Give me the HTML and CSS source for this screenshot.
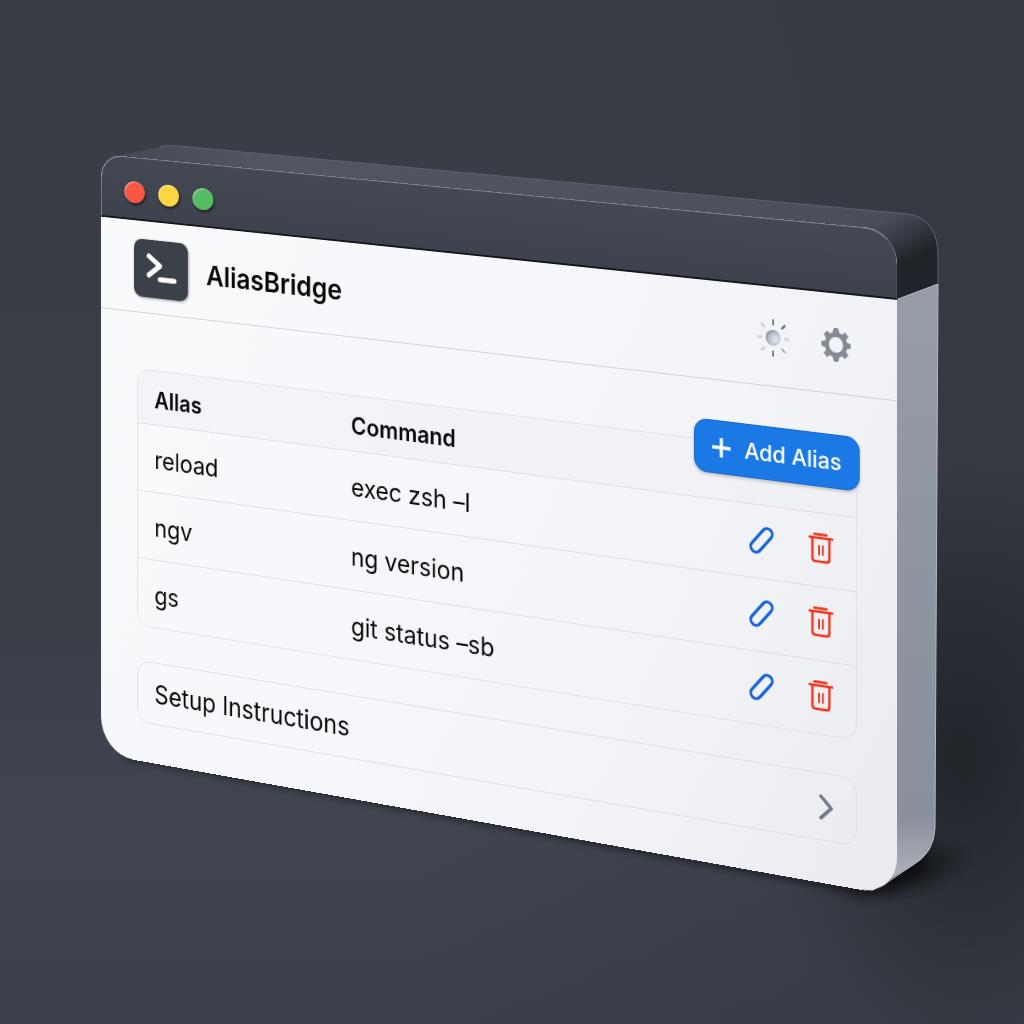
FILE: index.html
```
<!DOCTYPE html>
<html lang="en">
<head>
<meta charset="utf-8">
<title>AliasBridge</title>
<link rel="stylesheet" href="styles.css">
</head>
<body>
<div class="scene">
  <svg class="slab" viewBox="0 0 1024 1024" aria-hidden="true">
    <defs>
      <linearGradient id="lid" x1="0" y1="0" x2="1" y2="0">
        <stop offset="0" stop-color="#444853"/><stop offset=".2" stop-color="#525661"/>
        <stop offset=".85" stop-color="#4c505c"/><stop offset="1" stop-color="#484c57"/>
      </linearGradient>
      <linearGradient id="cap" gradientUnits="userSpaceOnUse" x1="892" y1="216" x2="922" y2="268">
        <stop offset="0" stop-color="#494d58"/><stop offset=".5" stop-color="#30333b"/><stop offset=".8" stop-color="#1f2227"/><stop offset="1" stop-color="#202329"/>
      </linearGradient>
      <linearGradient id="side" x1="0" y1="0" x2="0" y2="1">
        <stop offset="0" stop-color="#979da7"/><stop offset=".5" stop-color="#8f959f"/>
        <stop offset=".88" stop-color="#8a909b"/><stop offset="1" stop-color="#b6bac3"/>
      </linearGradient>
      <radialGradient id="corner"><stop offset="0" stop-color="#08090c" stop-opacity=".9"/><stop offset=".5" stop-color="#0c0e11" stop-opacity=".5"/><stop offset="1" stop-color="#14161a" stop-opacity="0"/></radialGradient>
      <filter id="contact" x="-20%" y="-20%" width="140%" height="140%"><feGaussianBlur stdDeviation="4"/></filter>
    </defs>
    <path fill="#0b0d10" opacity=".75" filter="url(#contact)" d="M120 756 L862 892 Q885 896 922 868 L930 800 L800 780 L300 700Z"/>
    <ellipse fill="url(#corner)" cx="900" cy="872" rx="78" ry="30" transform="rotate(-14 900 872)"/>
    <path fill="url(#lid)" d="M102 190 Q100 160 122 155 L160 147 Q166 145 178 146 L908 214 Q938 219 938 256 L938 284 L897 299Z"/>
    <path fill="url(#cap)" d="M866 228 L892 213 L908 214 Q938 219 938 256 L938 284 L897 300Z"/>
    <path fill="none" stroke="#5d626f" d="M160 147 Q166 145 178 146 L908 214 Q938 219 938 256 L938 283"/>
    <path fill="url(#side)" d="M890 302 L938 284 L935 828 Q934 853 913 865 L872 891 L850 880Z"/>
    <path fill="none" stroke="#b4b9c2" d="M898 299 L938 284 L935 828 Q934 853 913 865 L882 886"/>
  </svg>

  <main class="window">
    <div class="titlebar">
      <span class="light red"></span><span class="light yellow"></span><span class="light green"></span>
    </div>
    <header class="header">
      <span class="logo">
        <svg width="68" height="64" viewBox="0 0 68 64" fill="none" stroke="#fff" stroke-width="5.500" stroke-linecap="round" stroke-linejoin="round" aria-hidden="true">
          <path d="M19 18 L33 28 L19 39"/><path d="M33 43 H51"/>
        </svg>
      </span>
      <h1 class="name">AliasBridge</h1>
      <button class="icon-button" type="button" aria-label="Theme">
        <svg width="38" height="42" viewBox="0 0 38 42" aria-hidden="true">
          <defs><radialGradient id="orb" cx=".65" cy=".6" r=".65"><stop offset="0" stop-color="#e3e6ec"/><stop offset=".65" stop-color="#bcc2cb"/><stop offset="1" stop-color="#858c97"/></radialGradient></defs>
          <circle cx="19" cy="21" r="8" fill="url(#orb)"/>
          <g stroke-width="2"><path stroke="#777c84" d="M19 2v6M19 34v6"/><path stroke="#555a62" d="M32 7l-4 4"/><path stroke="#a4aab3" d="M28 31l4 4"/><path stroke="#c3c8d0" d="M6 7l4 4M6 35l4-4"/><path stroke="#cfd3da" stroke-width="3" d="M2 21h5M31 21h5"/></g>
        </svg>
      </button>
      <button class="icon-button" type="button" aria-label="Settings">
        <svg width="32" height="36" viewBox="-16 -18 32 36" aria-hidden="true">
          <g fill="#858b94" stroke="#70767f" stroke-width=".8">
            <path fill-rule="evenodd" d="M-2-16.500H2L3-12 6.500-10.500 9.500-13 12.500-9.500 10-6 11.500-2.500 15-2V2L11.500 2.500 10 6 12.500 9.500 9.500 13 6.500 10.500 3 12 2 16.500H-2L-3 12-6.500 10.500-9.500 13-12.500 9.500-10 6-11.500 2.500-15 2V-2L-11.500-2.500-10-6-12.500-9.500-9.500-13-6.500-10.500-3-12ZM0-8.500A8 8.500 0 1 0 0 8.500A8 8.500 0 1 0 0-8.500Z"/>
          </g>
        </svg>
      </button>
    </header>

    <div class="content">
      <section class="aliases">
        <table class="table">
          <thead>
            <tr><th class="col-alias" scope="col">Allas</th><th scope="col">Command</th><td class="col-actions"></td></tr>
          </thead>
          <tbody>
            <tr><td>reload</td><td>exec zsh –l</td><td><div class="actions">
              <button class="icon-button" type="button" aria-label="Edit reload"><svg class="edit" width="32" height="34" viewBox="0 0 32 34"><use href="#pencil"/></svg></button>
              <button class="icon-button" type="button" aria-label="Delete reload"><svg class="delete" width="32" height="34" viewBox="0 0 32 34"><use href="#trash"/></svg></button>
            </div></td></tr>
            <tr><td>ngv</td><td>ng version</td><td><div class="actions">
              <button class="icon-button" type="button" aria-label="Edit ngv"><svg class="edit" width="32" height="34" viewBox="0 0 32 34"><use href="#pencil"/></svg></button>
              <button class="icon-button" type="button" aria-label="Delete ngv"><svg class="delete" width="32" height="34" viewBox="0 0 32 34"><use href="#trash"/></svg></button>
            </div></td></tr>
            <tr><td>gs</td><td>git status –sb</td><td><div class="actions">
              <button class="icon-button" type="button" aria-label="Edit gs"><svg class="edit" width="32" height="34" viewBox="0 0 32 34"><use href="#pencil"/></svg></button>
              <button class="icon-button" type="button" aria-label="Delete gs"><svg class="delete" width="32" height="34" viewBox="0 0 32 34"><use href="#trash"/></svg></button>
            </div></td></tr>
          </tbody>
        </table>
        <button class="add" type="button">
          <svg width="22" height="22" viewBox="0 0 22 22" stroke="#fff" stroke-width="3.400" aria-hidden="true"><path d="M11 1v20M1 11h20"/></svg>
          Add Alias
        </button>
      </section>
      <button class="setup" type="button">
        Setup Instructions
        <svg width="16" height="28" viewBox="0 0 16 28" fill="none" stroke="#737982" stroke-width="3.500" stroke-linecap="round" stroke-linejoin="round" aria-hidden="true"><path d="M3 3 L14 14 L3 25"/></svg>
      </button>
    </div>
  </main>

  <svg class="symbols" aria-hidden="true">
    <symbol id="pencil" viewBox="0 0 32 34">
      <rect x="11" y="1.500" width="11" height="30" rx="5.500" transform="rotate(40 16.500 16.500)"/>
    </symbol>
    <symbol id="trash" viewBox="0 0 32 34">
      <path d="M4 6H28M9 2.500H22M7 6V27Q7 30 10 30H22Q25 30 25 27V6"/><path stroke-width="1.800" d="M14 14v9M18 14v9"/>
    </symbol>
  </svg>
</div>
</body>
</html>
```
FILE: styles.css
```
* {
  box-sizing: border-box;
}

body {
  margin: 0;
  min-height: 100vh;
  font-family: Inter, "Liberation Sans", sans-serif;
  color: #08090b;
  background:
    radial-gradient(ellipse 20% 30% at 94% 74%, rgba(24, 27, 31, 0.75), rgba(24, 27, 31, 0)),
    linear-gradient(90deg, rgba(50, 53, 62, 0) 40%, rgba(46, 49, 58, 0.35) 100%),
    linear-gradient(180deg, #393d46 0%, #3a3e47 60%, #414550 80%, #3c404a 100%);
}

button {
  font: inherit;
  color: inherit;
  cursor: pointer;
}

.scene {
  position: relative;
  max-width: 1024px;
  min-height: 100vh;
  margin: 0 auto;
  padding: 154px 3px 0 101px;
}

.slab {
  position: absolute;
  top: 0;
  left: 0;
  width: 100%;
}

.symbols {
  position: absolute;
  width: 0;
  height: 0;
}

/* Projects the flat window onto the front face of the slab. */
.window {
  position: relative;
  transform-origin: 0 0;
  transform: matrix3d(0.7795, 0.0748, 0, -0.0001077, 0, 0.8955, 0, 0, 0, 0, 1, 0, 0, 0, 0, 1);
  border-radius: 26px 34px 38px 42px;
  overflow: hidden;
  background: linear-gradient(115deg, #f9fafc 0%, #f6f7fa 45%, #f2f3f7 75%, #e9ebf0 100%);
}

.titlebar {
  display: flex;
  align-items: center;
  gap: 17px;
  height: 70px;
  padding: 8px 29px 0;
  border: 1px solid #7d8294;
  border-bottom: 2px solid #15171c;
  border-right-color: #4a4e59;
  border-radius: 26px 34px 0 0;
  background: linear-gradient(180deg, #444853, #3e424c);
}

.light {
  width: 26px;
  height: 24px;
  border-radius: 50%;
  box-shadow: inset 1px 1px 1px rgba(255, 255, 255, 0.5), 1px 2px 3px rgba(10, 12, 20, 0.7);
}

.red { background: #f95645; }
.yellow { background: #fdd441; }
.green { background: #55bd62; }

.header {
  display: flex;
  align-items: center;
  gap: 32px;
  height: 102px;
  padding: 3px 48px 0 42px;
  border-bottom: 1px solid #ccd2db;
}

.logo {
  display: flex;
  border-radius: 10px;
  background: #3c4049;
  box-shadow: 1px 1px 3px rgba(30, 35, 50, 0.5);
}

.name {
  flex: 1;
  margin: 0 0 0 -9px;
  font-size: 30px;
  line-height: 36px;
  font-weight: 600;
}

.icon-button {
  display: flex;
  padding: 0;
  border: 0;
  background: none;
}

.content {
  display: flex;
  flex-direction: column;
  gap: 38px;
  padding: 62px 42px 43px 46px;
}

.aliases {
  position: relative;
}

.table {
  width: 100%;
  table-layout: fixed;
  border: 1px solid #dde1e9;
  border-radius: 16px;
  border-spacing: 0;
  font-size: 27px;
  line-height: 36px;
}

.table th,
.table td {
  height: 75px;
  padding: 4px 21px 0;
  text-align: left;
  border-top: 1px solid #dadfe6;
}

.table thead th,
.table thead td {
  height: 59px;
  border-top: 0;
  font-size: 25px;
  font-weight: 600;
  background: rgba(238, 240, 246, 0.5);
}

.table thead th:first-child {
  border-top-left-radius: 15px;
}

.table .col-alias {
  width: 242px;
}

.col-actions {
  width: 180px;
}

.actions {
  display: flex;
  justify-content: flex-end;
  gap: 32px;
  padding-bottom: 6px;
}

.edit {
  fill: none;
  stroke: #1262d8;
  stroke-width: 3;
}

.delete {
  fill: none;
  stroke: #ee3218;
  stroke-width: 2.5;
  stroke-linecap: round;
}

.add {
  position: absolute;
  top: -21px;
  right: -3px;
  display: flex;
  align-items: center;
  gap: 14px;
  height: 55px;
  padding: 0 18px;
  border: 1px solid #1768d2;
  border-radius: 14px;
  font-size: 23px;
  line-height: 32px;
  font-weight: 500;
  color: #fff;
  background: #1b79e6;
  box-shadow: 0 2px 3px rgba(90, 80, 70, 0.3);
}

.setup {
  display: flex;
  align-items: center;
  justify-content: space-between;
  height: 69px;
  padding: 0 24px 0 21px;
  border: 1px solid #dadfe6;
  border-radius: 16px;
  font-size: 28px;
  line-height: 36px;
  background: none;
}
```
